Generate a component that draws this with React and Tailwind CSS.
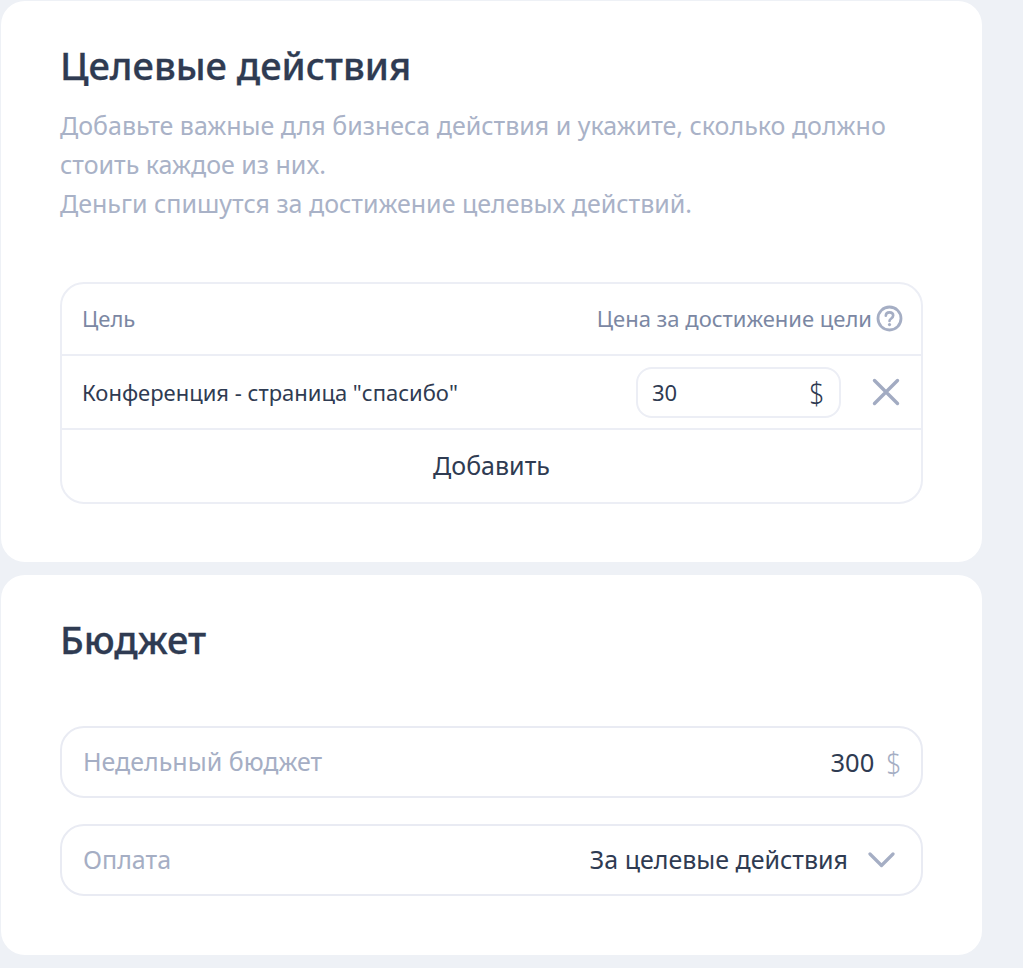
const font = "font-['Noto_Sans','Liberation_Sans',sans-serif]";

function Heading({ children }) {
    return <h2 className="text-[38px] leading-[44px] font-medium text-[#2f3b52] [-webkit-text-stroke:0.3px_#2f3b52]">{children}</h2>;
}

function HelpIcon() {
    return (
        <svg width="27" height="27" viewBox="0 0 27 27" fill="none">
            <circle cx="13.5" cy="13.5" r="11.5" stroke="#a5aec4" strokeWidth="2.8" />
            <path d="M9.8 10.8c0-2.1 1.6-3.4 3.7-3.4s3.7 1.2 3.7 3.2c0 2.9-3.7 2.8-3.7 5.4" stroke="#a5aec4" strokeWidth="2.6" strokeLinecap="round" />
            <circle cx="13.5" cy="19.6" r="1.6" fill="#a5aec4" />
        </svg>
    );
}

function CloseIcon() {
    return (
        <svg width="28" height="28" viewBox="0 0 28 28" fill="none">
            <path d="M2.5 2.5 25.5 25.5M25.5 2.5 2.5 25.5" stroke="#a2abc2" strokeWidth="3.4" strokeLinecap="round" />
        </svg>
    );
}

function ChevronIcon() {
    return (
        <svg width="27" height="16" viewBox="0 0 27 16" fill="none">
            <path d="M2 2 13.5 13.5 25 2" stroke="#a5aec4" strokeWidth="3.2" strokeLinecap="round" strokeLinejoin="round" />
        </svg>
    );
}

function Field({ label, children }) {
    return (
        <div className="flex h-[72px] items-center justify-between rounded-[24px] border-2 border-[#e9ebf3] pl-[21px] pr-[18px]">
            <span className="text-[25px] text-[#a5aec4]">{label}</span>
            {children}
        </div>
    );
}

export default function App() {
    return (
        <div className={`${font} min-h-[968px] bg-[#eef1f6] pl-px pt-px`}>
            <div className="flex w-[981px] flex-col gap-[13px]">
                <section className="h-[561px] rounded-[24px] bg-white pl-[59px] pr-[59px] pt-[42px]">
                    <Heading>Целевые действия</Heading>
                    <p className="mt-[19px] text-[25px] leading-[39px] text-[#a9b2c7]">
                        Добавьте важные для бизнеса действия и укажите, сколько должно
                        <br />
                        стоить каждое из них.
                        <br />
                        Деньги спишутся за достижение целевых действий.
                    </p>
                    <div className="mt-[59px] rounded-[24px] border-2 border-[#eceef5]">
                        <div className="flex h-[72px] items-center justify-between border-b-2 border-[#eceef5] pb-[2px] pl-[20px] pr-[18px] text-[22px] text-[#7b87a3]">
                            <span>Цель</span>
                            <span className="flex items-center gap-[4px]">
                                Цена за достижение цели
                                <HelpIcon />
                            </span>
                        </div>
                        <div className="flex h-[74px] items-center justify-between border-b-2 border-[#eceef5] pl-[20px] pr-[21px]">
                            <span className="text-[22px] text-[#2f3b52]">Конференция - страница "спасибо"</span>
                            <div className="flex items-center gap-[31px]">
                                <div className="flex h-[51px] w-[205px] items-center justify-between rounded-[16px] border-2 border-[#eceef5] pl-[14px] pr-[13px] text-[#2f3b52]">
                                    <span className="text-[22px]">30</span>
                                    <span className="scale-x-[0.85] text-[31px] font-light">$</span>
                                </div>
                                <CloseIcon />
                            </div>
                        </div>
                        <div className="flex h-[72px] items-center justify-center text-[25px] text-[#2f3b52]">Добавить</div>
                    </div>
                </section>
                <section className="h-[380px] rounded-[24px] bg-white pl-[59px] pr-[59px] pt-[42px]">
                    <Heading>Бюджет</Heading>
                    <div className="mt-[65px] flex flex-col gap-[26px]">
                        <Field label="Недельный бюджет">
                            <span className="flex items-center gap-[11px] text-[#2f3b52]">
                                <span className="text-[25.5px]">300</span>
                                <span className="scale-x-[0.85] text-[31px] font-light text-[#a5aec4]">$</span>
                            </span>
                        </Field>
                        <Field label="Оплата">
                            <span className="flex items-center gap-[20px] pr-[8px] text-[25px] text-[#2f3b52]">
                                За целевые действия
                                <ChevronIcon />
                            </span>
                        </Field>
                    </div>
                </section>
            </div>
        </div>
    );
}
